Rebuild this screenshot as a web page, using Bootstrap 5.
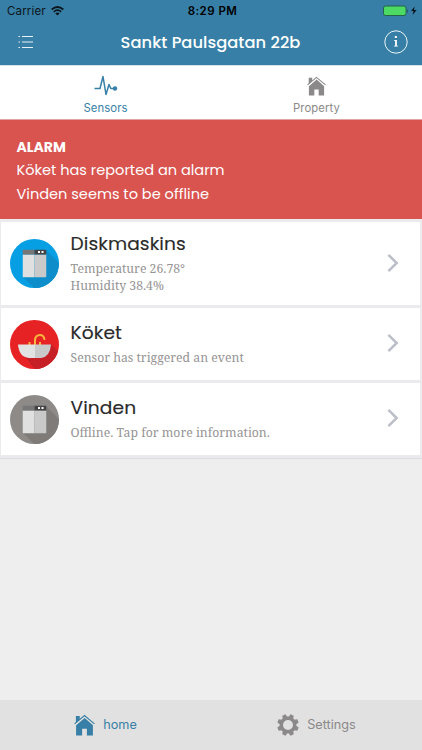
<!DOCTYPE html>
<html lang="en">
<head>
<meta charset="utf-8">
<meta name="viewport" content="width=device-width, initial-scale=1">
<title>Sankt Paulsgatan 22b</title>
<link href="https://cdn.jsdelivr.net/npm/bootstrap@5.3.0/dist/css/bootstrap.min.css" rel="stylesheet">
<style>
  html, body { height: 100%; }
  body { font-family: Poppins, Inter, "Open Sans", sans-serif; background: #eee; color: #2a2a2a; overflow: hidden; }
  svg { display: block; flex: none; }
  .app-head { background: #377fa6; height: 65px; }
  .status { height: 22px; color: #0b151b; font: 11.5px/22px Inter, sans-serif; padding: 0 4px 0 7px; }
  .status > div { flex: 1 1 0; }
  .carrier { letter-spacing: .15px; }
  .clock { font-weight: 600; text-align: center; letter-spacing: .45px; color: #000; }
  .wifi { margin-left: 5px; }
  .title-bar { height: 41px; padding: 0 14px 1px 18px; color: #fff; }
  .title { font-size: 16.3px; font-weight: 500; line-height: 24px; letter-spacing: .05px; margin: 1px 5px 0 0; }
  .top-tabs { height: 55px; background: #fff; border-bottom: 1px solid #e0a5a3; border-top: 1px solid #d5e2e9; }
  .top-tab { font: 11.3px/15px Inter, sans-serif; letter-spacing: .1px; color: #8b8989; padding-top: 9px; text-decoration: none; }
  .top-tab:hover, .top-tab { color: #8b8989; }
  .top-tab.on { color: #377fa6; }
  .house-top { margin-top: 1px; margin-bottom: 5px; }
  .alarm { background: #d9534f; height: 99px; color: #fff; padding: 15.500px 16.500px; font-size: 14.550px; line-height: 23.500px; }
  .alarm strong { font-size: 14px; font-weight: 700; }
  .sensors { padding: 3px 2px 3px 1px; background: #ebebee; gap: 3px; box-shadow: 0 1px 1px #dedee6; }
  .sensor { background: #fff; height: 72px; padding: 0 21px 0 8.500px; color: inherit; text-decoration: none; }
  .sensor.tall { height: 83px; }
  .sensor h2 { font-size: 18.600px; line-height: 26px; font-weight: 400; margin: -3px 0 3px; letter-spacing: .1px; -webkit-text-stroke: .15px; }
  .detail { font: 12.250px/17px "Droid Serif", "Noto Serif", "DejaVu Serif", serif; color: #969494; }
  .chevron { margin-bottom: 2px; }
  .bottom { height: 50px; background: #e1e1e1; font: 12.700px/18px Inter, sans-serif; }
  .bottom a { color: #8b8989; }
  .bottom .on { color: #377fa6; }
</style>
<script src="https://cdn.jsdelivr.net/npm/bootstrap@5.3.0/dist/js/bootstrap.bundle.min.js"></script>
</head>
<body class="d-flex flex-column">
<svg width="0" height="0" class="position-absolute">
  <defs>
    <symbol id="house" viewBox="0 0 22 22">
      <path fill="currentColor" d="M2 1.500h4v4L2 9zM2.200 11.200 11.200 3.600 19.800 11.200V22H13.500v-7h-5v7H2.200z"/>
      <path fill="none" stroke="currentColor" stroke-width="1.200" d="M.6 9.800 11 1l10.400 8.800"/>
    </symbol>
    <symbol id="washer" viewBox="0 0 24 28">
      <path fill="#e0e0e0" d="M0 5h12v23H1q-1 0-1-1z"/><path fill="#c9c9c9" d="M12 5h12v22q0 1-1 1H12z"/>
      <path fill="#777" d="M1 0h11v5H0V1q0-1 1-1z"/><path fill="#444" d="M12 0h11q1 0 1 1v4H12z"/>
      <path fill="#fff" d="M15.500 1.500h2v2h-2zM19 1.500h2v2h-2z"/>
    </symbol>
    <symbol id="arrow" viewBox="0 0 12 20"><path fill="none" stroke="#bcbfc9" stroke-width="2.500" d="m1.400 1.800 8.300 8.200-8.300 8.200"/></symbol>
    <clipPath id="disc"><circle cx="24.500" cy="24.500" r="24.500"/></clipPath>
  </defs>
</svg>

<header class="app-head">
  <div class="status d-flex align-items-center">
    <div class="d-flex align-items-center"><span class="carrier">Carrier</span>
      <svg class="wifi" width="13" height="10" viewBox="0 0 13 10" fill="none" stroke="#0b151b" stroke-width="1.700"><path d="M.7 3.500q5.800-5 11.600 0M2.800 5.800q3.700-3.200 7.400 0"/><path fill="#0b151b" stroke="none" d="M4.400 7.400q2.100-1.700 4.200 0L6.500 9.600z"/></svg>
    </div>
    <div class="clock">8:29 PM</div>
    <div class="d-flex justify-content-end align-items-center">
      <svg width="35" height="12" viewBox="0 0 35 12"><rect x=".5" y="1" width="22.500" height="9.500" rx="2" fill="#4cd964" stroke="#236449"/><path fill="#163e38" d="M24.200 4q1.500 2 0 4z"/><path fill="#0b151b" d="m31.600 1.500-3.500 4.600h2.400l-1 4 4.200-5h-2.700z"/></svg>
    </div>
  </div>
  <div class="title-bar d-flex align-items-center justify-content-between">
    <svg width="24" height="14" viewBox="0 0 24 14" fill="none" stroke="#e8f2f7" stroke-width="1"><path d="M4 1.500h11M4 7h11M4 12.500h11M.5 1.500H2M.5 7H2M.5 12.500H2"/></svg>
    <h1 class="title">Sankt Paulsgatan 22b</h1>
    <svg width="24" height="24" viewBox="0 0 24 24"><circle cx="12" cy="12" r="11.200" fill="none" stroke="#eef6fa"/><path fill="#fff" d="M10.800 6h2.100v2h-2.100zM10 10h2.900v5.700h1.200v.8H9.900v-.8h1.200v-4.900H10z"/></svg>
  </div>
</header>

<nav class="top-tabs d-flex">
  <a class="top-tab on w-50 d-flex flex-column align-items-center">
    <svg width="24" height="22" viewBox="0 0 24 22" class="mb-1" fill="none" stroke="currentColor" stroke-width="1.500" stroke-linejoin="round"><path d="M.5 13.500H6L9 1.500l3 18 3-10 1.800 4H21"/><circle cx="21" cy="13.500" r="2.200" fill="currentColor" stroke="none"/></svg>
    <span>Sensors</span>
  </a>
  <a class="top-tab w-50 d-flex flex-column align-items-center">
    <svg width="19" height="20" class="house-top"><use href="#house"/></svg>
    <span>Property</span>
  </a>
</nav>

<section class="alarm">
  <div><strong>ALARM</strong></div>
  <div>Köket has reported an alarm</div>
  <div>Vinden seems to be offline</div>
</section>

<main class="flex-grow-1">
  <div class="sensors d-flex flex-column">
    <a class="sensor tall d-flex align-items-center">
      <svg width="49" height="49"><g clip-path="url(#disc)"><path fill="#069fe3" d="M0 0h49v49H0z"/><path fill="#0d8dca" d="m36 11 15 15v25H26L13 38z"/></g><use href="#washer" x="12.500" y="10.500" width="24" height="28"/></svg>
      <div class="flex-grow-1 ms-2 ps-1"><h2>Diskmaskins</h2><div class="detail">Temperature 26.78°<br>Humidity 38.4%</div></div>
      <svg class="chevron" width="12" height="20"><use href="#arrow"/></svg>
    </a>
    <a class="sensor d-flex align-items-center">
      <svg width="49" height="49"><g clip-path="url(#disc)"><path fill="#e62224" d="M0 0h49v49H0z"/><path fill="#c61f25" d="m41 24 10 10v17H26L14 35z"/></g><g fill="none" stroke="#f6b43c" stroke-width="2"><path d="M25 25v-4.500q0-5.500 5-5.500 4 0 4.500 5M19.500 25v-3M30 25v-3"/></g><path fill="#e2e2e2" d="M8 24.500h17V38h-6Q9 37 8 24.500z"/><path fill="#c9c9c9" d="M25 24.500h16Q40 37 31 38h-6z"/></svg>
      <div class="flex-grow-1 ms-2 ps-1"><h2>Köket</h2><div class="detail">Sensor has triggered an event</div></div>
      <svg class="chevron" width="12" height="20"><use href="#arrow"/></svg>
    </a>
    <a class="sensor d-flex align-items-center">
      <svg width="49" height="49"><g clip-path="url(#disc)"><path fill="#8d8a88" d="M0 0h49v49H0z"/><path fill="#7e7b79" d="m36 11 15 15v25H26L13 38z"/></g><use href="#washer" x="12.500" y="10.500" width="24" height="28"/></svg>
      <div class="flex-grow-1 ms-2 ps-1"><h2>Vinden</h2><div class="detail">Offline. Tap for more information.</div></div>
      <svg class="chevron" width="12" height="20"><use href="#arrow"/></svg>
    </a>
  </div>
</main>

<nav class="bottom d-flex">
  <a class="on w-50 d-flex align-items-center justify-content-center text-decoration-none"><svg width="21" height="22" class="me-2"><use href="#house"/></svg><span>home</span></a>
  <a class="w-50 d-flex align-items-center justify-content-center text-decoration-none"><svg width="22" height="22" viewBox="-11 -11 22 22" class="me-2"><circle r="6.700" fill="none" stroke="currentColor" stroke-width="3.400"/><g fill="currentColor"><path id="tooth" d="m-2.500-7.500.8-3.300h3.400l.8 3.300z" transform="rotate(22.500)"/><use href="#tooth" transform="rotate(45)"/><use href="#tooth" transform="rotate(90)"/><use href="#tooth" transform="rotate(135)"/><use href="#tooth" transform="rotate(180)"/><use href="#tooth" transform="rotate(225)"/><use href="#tooth" transform="rotate(270)"/><use href="#tooth" transform="rotate(315)"/></g></svg><span>Settings</span></a>
</nav>
</body>
</html>
